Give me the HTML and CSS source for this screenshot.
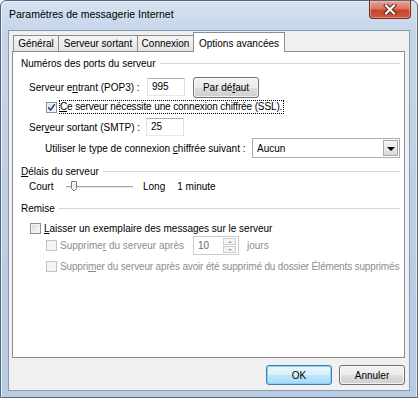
FILE: index.html
```html
<!DOCTYPE html>
<html lang="fr">
<head>
    <meta charset="UTF-8">
    <title>Paramètres de messagerie Internet</title>
    <link rel="stylesheet" href="styles.css">
</head>
<body>
    <div class="window">
        <div class="titlebar">
            <span class="title">Paramètres de messagerie Internet</span>
            <span class="close">
                <svg width="14" height="11" viewBox="0 0 14 11">
                    <path d="M3 1.5 L11 9.5 M11 1.5 L3 9.5" stroke="#5a1a12" stroke-width="4" stroke-linecap="square" fill="none"/>
                    <path d="M3 1.5 L11 9.5 M11 1.5 L3 9.5" stroke="#fff" stroke-width="2.2" stroke-linecap="square" fill="none"/>
                </svg>
            </span>
        </div>

        <div class="client">
            <div class="tabs">
                <div class="tab tab-general">Général</div>
                <div class="tab tab-sortant">Serveur sortant</div>
                <div class="tab tab-connexion">Connexion</div>
                <div class="tab tab-options active">Options avancées</div>
            </div>

            <div class="panel">
                <div class="group group-ports">Numéros des ports du serveur</div>

                <div class="row row-pop">
                    <span class="label">Serveur e<u>n</u>trant (POP3) :</span>
                    <span class="textbox port">995</span>
                    <span class="button btn-default">Par dé<u>f</u>aut</span>
                </div>

                <div class="row row-ssl">
                    <span class="check">
                        <svg width="9" height="9" viewBox="0 0 9 9">
                            <path d="M1.2 4.4 L3.6 7 L7.8 1.2" stroke="#2c4a8c" stroke-width="1.6" fill="none"/>
                        </svg>
                    </span>
                    <span class="focus"><u>C</u>e serveur nécessite une connexion chiffrée (SSL).</span>
                </div>

                <div class="row row-smtp">
                    <span class="label label-smtp">Ser<u>v</u>eur sortant (SMTP) :</span>
                    <span class="textbox port">25</span>
                </div>

                <div class="row row-crypt">
                    <span class="label label-crypt">Utiliser le type de connexion <u>c</u>hiffrée suivant :</span>
                    <span class="select">
                        <span class="select-value">Aucun</span>
                        <span class="select-arrow"></span>
                    </span>
                </div>

                <div class="group group-delay"><span><u>D</u>élais du serveur</span></div>

                <div class="row row-slider">
                    <span class="label label-court">Court</span>
                    <svg class="slider" width="67" height="14" viewBox="0 0 67 14">
                        <rect x="0" y="7" width="67" height="1" fill="#a9a9a9"/>
                        <rect x="0" y="8" width="67" height="1" fill="#e6e6e6"/>
                        <path d="M5.5 2.5 H10.5 V9.5 L8 12 L5.5 9.5 Z" fill="#f4f4f4" stroke="#7a7a7a"/>
                    </svg>
                    <span class="long">Long</span>
                    <span class="minute">1 minute</span>
                </div>

                <div class="group group-remise">Remise</div>

                <div class="row row-keep">
                    <span class="check"></span>
                    <span class="text"><u>L</u>aisser un exemplaire des messages sur le serveur</span>
                </div>

                <div class="row row-del">
                    <span class="check disabled"></span>
                    <span class="text muted label-del">Supprime<u>r</u> du serveur après</span>
                    <span class="spin">
                        <span class="spin-value">10</span>
                        <span class="spin-buttons">
                            <span class="spin-up"></span>
                            <span class="spin-down"></span>
                        </span>
                    </span>
                    <span class="muted jours">jours</span>
                </div>

                <div class="row row-del2">
                    <span class="check disabled"></span>
                    <span class="text muted tight">Suppri<u>m</u>er du serveur après avoir été supprimé du dossier Éléments supprimés</span>
                </div>
            </div>

            <div class="actions">
                <span class="button btn-ok">OK</span>
                <span class="button">Annuler</span>
            </div>
        </div>
    </div>
</body>
</html>
```

FILE: styles.css
```css
* {
    box-sizing: border-box;
}

body {
    margin: 0;
    font-family: "Liberation Sans", Arial, sans-serif;
    font-size: 10px;
    color: #000;
    background: #fff;
    white-space: nowrap;
}

u {
    text-decoration-thickness: 1px;
    text-underline-offset: 1px;
}

/* window frame */
.window {
    width: 418px;
    height: 398px;
    border: 1px solid #56667a;
    border-radius: 6px 6px 0 0;
    padding: 0 7px 6px;
    display: flex;
    flex-direction: column;
    background: linear-gradient(180deg, #d6e2f0 0, #c6d6ea 28px, #bccee4 60%, #b7cbe3 100%);
    box-shadow: inset 1px 1px 0 #e9f0f8, inset -1px 0 0 #e2eaf4;
}

.titlebar {
    height: 29px;
    display: flex;
    align-items: flex-start;
}

.title {
    margin: 7px 0 0 1px;
    font-size: 10.5px;
    line-height: 13px;
}

.close {
    margin-left: auto;
    margin-right: -1px;
    width: 42px;
    height: 18px;
    display: flex;
    align-items: center;
    justify-content: center;
    border: 1px solid #6f2a1f;
    border-top: none;
    border-radius: 0 0 4px 4px;
    background: linear-gradient(180deg, #e7a597 0, #d9735f 45%, #c7452c 55%, #d1583c 100%);
    box-shadow: inset 0 0 0 1px rgba(255, 210, 200, 0.45);
}

.client {
    flex: 1;
    border: 1px solid #8a9bb0;
    background: #f0f0f0;
    padding: 1px 4px 0 3px;
    display: flex;
    flex-direction: column;
}

/* tabs */
.tabs {
    height: 19px;
    display: flex;
    align-items: flex-start;
    padding-left: 1px;
}

.tab {
    height: 16px;
    margin-top: 3px;
    margin-right: -1px;
    border: 1px solid #898c95;
    border-bottom: none;
    background: linear-gradient(180deg, #f5f5f5, #e4e4e4);
    line-height: 15px;
    text-align: center;
}

.tab-general { width: 46px; }
.tab-sortant { width: 80px; }
.tab-connexion { width: 57px; }

.tab.active {
    width: 92px;
    height: 20px;
    margin-top: 0;
    padding-top: 4px;
    line-height: 13px;
    background: #fff;
    position: relative;
    z-index: 1;
}

.panel {
    height: 307px;
    border: 1px solid #898c95;
    background: #fff;
    padding: 0 4px 0 8px;
}

/* group titles with rule */
.group {
    display: flex;
    align-items: center;
    height: 14px;
    line-height: 13px;
}

.group::after {
    content: "";
    flex: 1;
    margin-left: 4px;
    border-top: 1px solid #d5d5d5;
}

.group-ports { margin-top: 4px; }
.group-delay { margin-top: 6px; }
.group-remise { margin-top: 7px; }

.row {
    display: flex;
    align-items: center;
    height: 20px;
}

.row-pop { margin-top: 7px; padding-left: 8px; }
.row-ssl { padding-left: 25px; }
.row-smtp { padding-left: 8px; }
.row-crypt { margin-top: 1px; padding-left: 24px; }
.row-slider { height: 16px; padding-left: 8px; }
.row-keep { height: 16px; margin-top: 5px; padding-left: 9px; }
.row-del { height: 19px; padding-left: 25px; }
.row-del2 { height: 16px; margin-top: 3px; padding-left: 25px; }

.label { width: 118px; }
.label-smtp { width: 117px; }
.label-crypt { width: 207px; }
.label-court { width: 37px; }

.textbox {
    height: 18px;
    border: 1px solid #abadb3;
    border-color: #abadb3 #dbdfe6 #e3e9ef #e2e3ea;
    background: #fff;
    padding-left: 4px;
    line-height: 16px;
}

.port { width: 38px; }

/* buttons */
.button {
    display: flex;
    align-items: center;
    justify-content: center;
    height: 20px;
    width: 66px;
    border: 1px solid #707070;
    border-radius: 3px;
    background: linear-gradient(180deg, #f2f2f2 0%, #ebebeb 50%, #dddddd 50%, #cfcfcf 100%);
    box-shadow: inset 0 0 0 1px rgba(255, 255, 255, 0.7);
}

.btn-default {
    margin-left: 8px;
    height: 21px;
}

.btn-ok {
    border-color: #3c7fb1;
    background: linear-gradient(180deg, #eaf6fd 0%, #d9f0fc 50%, #bee6fd 50%, #a7d9f5 100%);
    box-shadow: inset 0 0 0 1px #8fd0f2;
}

/* checkboxes */
.check {
    width: 11px;
    height: 11px;
    flex: none;
    border: 1px solid #8e8f8f;
    background: linear-gradient(135deg, #d8d8d8, #fbfbfb);
    box-shadow: inset 0 0 0 1px #f4f4f4;
    display: flex;
    align-items: center;
    justify-content: center;
    margin-right: 3px;
}

.check.disabled {
    border-color: #c4c4c4;
    background: #f4f4f4;
    box-shadow: none;
}

.row-ssl .check { margin-right: 2px; }

.focus {
    border: 1px dotted #000;
    padding: 0 1px 0 0;
    line-height: 12px;
    letter-spacing: -0.12px;
}

.muted { color: #8d8d8d; }

.tight { letter-spacing: -0.16px; }

.label-del { width: 133px; }

/* combobox */
.select {
    width: 148px;
    height: 20px;
    display: flex;
    align-items: center;
    border: 1px solid #abadb3;
    background: #fff;
}

.select-value {
    flex: 1;
    padding-left: 4px;
}

.select-arrow {
    width: 15px;
    height: 16px;
    margin-right: 1px;
    border: 1px solid #a8a8a8;
    background: linear-gradient(180deg, #f6f6f6, #dadada);
    display: flex;
    align-items: center;
    justify-content: center;
}

.select-arrow::after {
    content: "";
    border-left: 4px solid transparent;
    border-right: 4px solid transparent;
    border-top: 4px solid #000;
    margin-top: 1px;
}

/* slider */
.slider { flex: none; }

.long { margin-left: 10px; }
.minute { margin-left: 12px; }

/* spinner */
.spin {
    width: 46px;
    height: 19px;
    display: flex;
    align-items: center;
    border: 1px solid #c9cbcf;
    background: #fff;
    color: #6d6d6d;
}

.spin-value {
    flex: 1;
    padding-left: 4px;
}

.spin-buttons {
    width: 13px;
    height: 15px;
    margin-right: 2px;
    display: flex;
    flex-direction: column;
    gap: 1px;
}

.spin-up,
.spin-down {
    flex: 1;
    border: 1px solid #cfcfcf;
    background: #f4f4f4;
    display: flex;
    align-items: center;
    justify-content: center;
}

.spin-up::after {
    content: "";
    border-left: 2px solid transparent;
    border-right: 2px solid transparent;
    border-bottom: 2px solid #a0a0a0;
}

.spin-down::after {
    content: "";
    border-left: 2px solid transparent;
    border-right: 2px solid transparent;
    border-top: 2px solid #a0a0a0;
}

.jours { margin-left: 8px; }

/* bottom buttons */
.actions {
    display: flex;
    justify-content: flex-end;
    gap: 7px;
    margin-top: 7px;
}
```
